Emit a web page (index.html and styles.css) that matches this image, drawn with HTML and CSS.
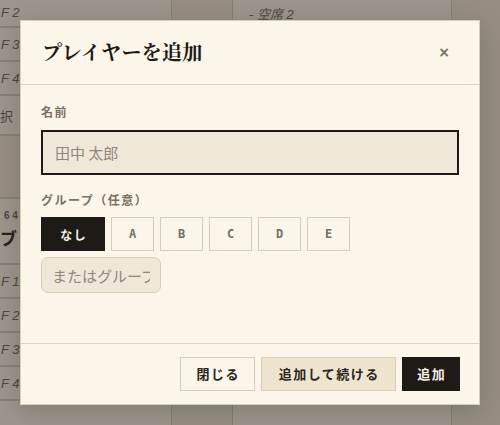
FILE: index.html
```
<!DOCTYPE html>
<html lang="ja">
<head>
<meta charset="utf-8">
<title>プレイヤーを追加</title>
<link rel="stylesheet" href="styles.css">
</head>
<body>
<div class="board">
  <div class="col col-a">
    <div class="row"><span class="seat">F 2</span></div>
    <div class="row"><span class="seat">F 3</span></div>
    <div class="row"><span class="seat">F 4</span></div>
    <div class="row row-tall"><span class="pick">択</span></div>
    <div class="row row-dark"></div>
    <div class="row row-head"><span class="num">6 4</span><span class="grp">ブ</span></div>
    <div class="row"><span class="seat">F 1</span></div>
    <div class="row"><span class="seat">F 2</span></div>
    <div class="row"><span class="seat">F 3</span></div>
    <div class="row"><span class="seat">F 4</span></div>
    <div class="row"></div>
  </div>
  <div class="col col-b"></div>
  <div class="col col-c">
    <div class="row"><span class="seat empty">- 空席 2</span></div>
  </div>
  <div class="col col-d"></div>
</div>
<div class="overlay"></div>

<div class="modal" role="dialog" aria-labelledby="m-title">
  <div class="modal-head">
    <h2 id="m-title" class="modal-title">プレイヤーを追加</h2>
    <button class="close" type="button" aria-label="閉じる">×</button>
  </div>
  <div class="modal-body">
    <label class="field-label" for="name">名前</label>
    <input id="name" class="name-input" type="text" placeholder="田中 太郎">
    <div class="field-label group-label">グループ（任意）</div>
    <div class="groups">
      <button class="gbtn gbtn-active" type="button">なし</button>
      <button class="gbtn" type="button">A</button>
      <button class="gbtn" type="button">B</button>
      <button class="gbtn" type="button">C</button>
      <button class="gbtn" type="button">D</button>
      <button class="gbtn" type="button">E</button>
    </div>
    <input class="group-input" type="text" placeholder="またはグループ名">
  </div>
  <div class="modal-foot">
    <button class="fbtn fbtn-plain" type="button">閉じる</button>
    <button class="fbtn fbtn-soft" type="button">追加して続ける</button>
    <button class="fbtn fbtn-dark" type="button">追加</button>
  </div>
</div>
</body>
</html>
```
FILE: styles.css
```
* { box-sizing: border-box; }
html, body { margin: 0; padding: 0; }
body {
  width: 500px;
  height: 425px;
  overflow: hidden;
  background: #f5efe2;
  font-family: "DejaVu Sans Mono", "Noto Sans CJK JP", monospace;
  position: relative;
}

/* background board */
.board {
  display: flex;
  height: 425px;
}
.col { height: 100%; }
.col-a { width: 172px; border-right: 1px solid #cfc5b1; }
.col-b { width: 61px; background: #ece3d2; border-right: 1px solid #cfc5b1; }
.col-c { width: 219px; border-right: 1px solid #cfc5b1; }
.col-d { flex: 1; background: #ece3d2; }
.row {
  height: 34px;
  border-bottom: 2px solid #d3c9b5;
  display: flex;
  align-items: center;
  font-family: "Liberation Sans", "Noto Sans CJK JP", sans-serif;
  font-size: 13px;
  color: #6b6357;
}
.col-a .row:first-child { height: 29px; margin-top: -1px; }
.row-tall { height: 40px; }
.row-dark { height: 63px; background: #ebe2d1; }
.row-head {
  height: 66px;
  flex-direction: column;
  align-items: flex-start;
  justify-content: flex-start;
  padding-top: 11px;
  gap: 6px;
  line-height: 1;
}
.seat { font-style: italic; padding-left: 1px; }
.empty { padding-left: 16px; }
.col-c .row { height: 29px; border-bottom: none; margin-top: -1px; }
.pick { padding-left: 0; font-size: 13px; }
.num { font-size: 10px; font-weight: bold; padding-left: 4px; line-height: 12px; }
.grp { font-family: "Noto Sans CJK JP", sans-serif; font-size: 17px; line-height: 20px; font-weight: bold; color: #2a2520; }

.overlay {
  position: absolute;
  inset: 0;
  background: rgba(40, 35, 30, 0.44);
}

/* modal */
.modal {
  position: absolute;
  left: 20px;
  top: 20px;
  width: 460px;
  height: 385px;
  background: #fbf5ea;
  border: 1px solid #d9cfb9;
  display: flex;
  flex-direction: column;
  box-shadow: 0 6px 24px rgba(20, 15, 10, 0.18);
}
.modal-head {
  height: 64px;
  flex: none;
  display: flex;
  align-items: center;
  justify-content: space-between;
  padding: 0 29px 2px 21px;
  border-bottom: 1px solid #ddd3bd;
}
.modal-title {
  margin: 0;
  font-family: "Noto Serif CJK JP", "Liberation Serif", serif;
  font-size: 20px;
  font-weight: bold;
  letter-spacing: 0.3px;
  color: #1c1a18;
}
.close {
  border: none;
  background: none;
  padding: 0;
  font-family: "DejaVu Sans", sans-serif;
  font-size: 14px;
  font-weight: bold;
  color: #7a6e60;
  line-height: 1;
  cursor: pointer;
}

.modal-body {
  flex: 1;
  display: flex;
  flex-direction: column;
  align-items: flex-start;
  padding: 21px 20px 0 20px;
}
.field-label {
  display: block;
  font-size: 12px;
  font-weight: bold;
  letter-spacing: 1.5px;
  line-height: 14px;
  color: #7b6f62;
  margin-bottom: 10px;
}
.name-input {
  width: 418px;
  height: 45px;
  border: 2px solid #1e1a17;
  background: #efe8d8;
  padding: 0 12px;
  font-family: "Noto Sans CJK JP", sans-serif;
  font-size: 15px;
  color: #2a2520;
  outline: none;
}
.name-input::placeholder { color: #8f877b; }
.group-label { margin-top: 19px; margin-bottom: 9px; }
.groups {
  display: flex;
  gap: 6px;
}
.gbtn {
  height: 34px;
  width: 43px;
  padding: 0;
  border: 1px solid #d8cdb5;
  background: transparent;
  font-family: "DejaVu Sans Mono", "Noto Sans CJK JP", monospace;
  font-size: 12px;
  font-weight: bold;
  letter-spacing: 1.5px;
  text-indent: 1.5px;
  color: #7a6e60;
}
.gbtn-active {
  width: 64px;
  background: #1e1a17;
  border-color: #1e1a17;
  color: #f7f1e5;
}
.group-input {
  margin-top: 6px;
  width: 120px;
  height: 36px;
  border: 1px solid #d8cdb5;
  border-radius: 7px;
  background: #efe8d8;
  padding: 0 10px;
  font-family: "Noto Sans CJK JP", sans-serif;
  font-size: 15px;
  color: #2a2520;
  outline: none;
}
.group-input::placeholder { color: #8f877b; }

.modal-foot {
  flex: none;
  height: 61px;
  border-top: 1px solid #ddd3bd;
  display: flex;
  justify-content: flex-end;
  align-items: center;
  gap: 6px;
  padding: 0 19px 1px 20px;
}
.fbtn {
  height: 34px;
  padding: 0;
  border: 1px solid #d8cdb5;
  white-space: nowrap;
  font-family: "DejaVu Sans Mono", "Noto Sans CJK JP", monospace;
  font-size: 13px;
  font-weight: bold;
  letter-spacing: 1.5px;
  text-indent: 1.5px;
  color: #2a2520;
}
.fbtn-plain { width: 75px; background: #fbf5ea; }
.fbtn-soft { width: 135px; background: #efe5cf; }
.fbtn-dark { width: 58px; background: #1e1a17; border-color: #1e1a17; color: #f7f1e5; }
```
